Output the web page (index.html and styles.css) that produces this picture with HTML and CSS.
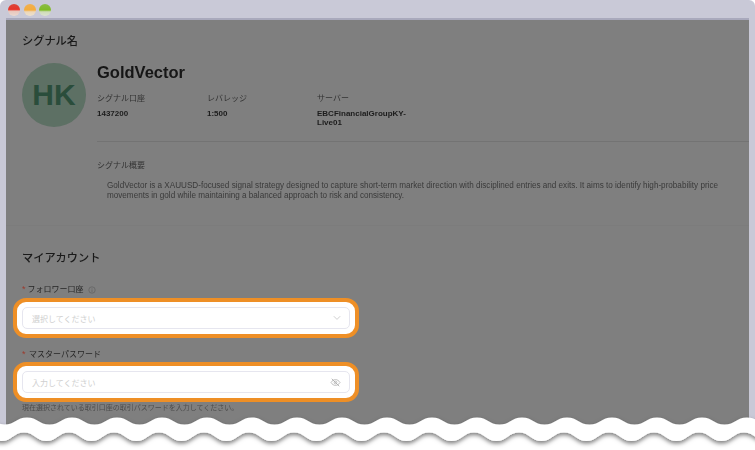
FILE: index.html
```html
<!DOCTYPE html>
<html lang="ja">
<head>
  <meta charset="UTF-8">
  <meta name="viewport" content="width=device-width, initial-scale=1.0">
  <title>シグナル名</title>
  <link rel="stylesheet" href="styles.css">
</head>
<body>
  <div class="window">
    <div class="titlebar">
      <span class="light red"></span>
      <span class="light orange"></span>
      <span class="light green"></span>
    </div>

    <div class="content">
      <section class="card card-signal">
        <h2 class="card-title">シグナル名</h2>
        <div class="profile">
          <div class="avatar">HK</div>
          <div class="info">
            <div class="name">GoldVector</div>
            <div class="stats">
              <div>
                <div class="stat-label">シグナル口座</div>
                <div class="stat-value">1437200</div>
              </div>
              <div>
                <div class="stat-label">レバレッジ</div>
                <div class="stat-value">1:500</div>
              </div>
              <div>
                <div class="stat-label">サーバー</div>
                <div class="stat-value">EBCFinancialGroupKY-Live01</div>
              </div>
            </div>
            <div class="summary">
              <div class="stat-label">シグナル概要</div>
              <p class="summary-text">GoldVector is a XAUUSD-focused signal strategy designed to capture short-term market direction with disciplined entries and exits. It aims to identify high-probability price movements in gold while maintaining a balanced approach to risk and consistency.</p>
            </div>
          </div>
        </div>
      </section>

      <section class="card card-account">
        <h2 class="card-title">マイアカウント</h2>

        <label class="field-label first">
          <span class="star">*</span>フォロワー口座
          <svg class="info-icon" viewBox="0 0 8 8" width="8" height="8">
            <circle cx="4" cy="4" r="3.2" fill="none" stroke="#5c5c5c" stroke-width="0.6"/>
            <path d="M4 3.4V6M4 2.2v.6" stroke="#5c5c5c" stroke-width="0.6" fill="none"/>
          </svg>
        </label>
        <div class="highlight">
          <div class="input">
            <span>選択してください</span>
            <svg viewBox="0 0 8 6" width="8" height="6">
              <path d="M.8 1.2 4 4.4l3.2-3.2" fill="none" stroke="#c4c4c4" stroke-width="0.8"/>
            </svg>
          </div>
        </div>

        <label class="field-label second">
          <span class="star wide">*</span>マスターパスワード
        </label>
        <div class="highlight tight">
          <div class="input">
            <span>入力してください</span>
            <svg viewBox="0 0 12 10" width="11" height="9">
              <path d="M1 5c1.4-2.2 3-3.2 5-3.2S9.600 2.800 11 5C9.600 7.200 8 8.200 6 8.200S2.400 7.200 1 5Z" fill="none" stroke="#a8a8a8" stroke-width="0.8"/>
              <circle cx="6" cy="5" r="1.500" fill="none" stroke="#a8a8a8" stroke-width="0.8"/>
              <path d="M1.800 .8l8.400 8.400" stroke="#a8a8a8" stroke-width="0.9"/>
            </svg>
          </div>
        </div>
        <p class="hint">現在選択されている取引口座の取引パスワードを入力してください。</p>
      </section>
    </div>
  </div>

  <!-- torn edge across the bottom of the screenshot -->
  <svg class="wave" viewBox="0 0 755 40" width="755" height="40">
    <defs>
      <filter id="wave-shadow" x="-2%" y="-40%" width="104%" height="200%">
        <feDropShadow dx="0" dy="2.500" stdDeviation="2" flood-color="#000" flood-opacity="0.5"/>
      </filter>
    </defs>
    <path id="band" fill="#fff" filter="url(#wave-shadow)" d=""/>
  </svg>

  <script>
    // Wavy band: period 45px. Upper crests at x=27, lower ones a little to the left
    const period = 45;
    const half = period / 2;
    const first = 27 - period * 2;
    const last = first + period * 20;
    const bend = 10.5; // control point offset, rounder than a plain sine

    let d = `M${first - half} 14.500`;
    for (let x = first; x <= last; x += period) {
      d += ` C${x - half + bend} 14.500 ${x - bend} 7.500 ${x} 7.500 S${x + half - bend} 14.500 ${x + half} 14.500`;
    }
    d += ` L${last + half} 31`;
    for (let x = last - 3; x >= first - 3; x -= period) {
      d += ` C${x + half - bend} 31 ${x + bend} 22.500 ${x} 22.500 S${x - half + bend} 31 ${x - half} 31`;
    }
    d += ' Z';
    document.getElementById('band').setAttribute('d', d);
  </script>
</body>
</html>
```

FILE: styles.css
```css
body {
  margin: 0;
  background: #fff;
  font-family: "Liberation Sans", "Noto Sans CJK JP", sans-serif;
  color: #1c1c1c;
  overflow: hidden;
}

.window {
  height: 428px;
  overflow: hidden;
  background: #c9c9d7;
  padding: 0 6px;
  border-radius: 6px 6px 0 0;
}

.titlebar {
  display: flex;
  gap: 3.500px;
  align-items: center;
  height: 18px;
  padding: 2px 0 0 2px;
  box-sizing: border-box;
  filter: blur(0.3px);
}

.light {
  width: 12px;
  height: 12px;
  border-radius: 50%;
}

.red { background: linear-gradient(#d9483c 0, #e8352a 45%, #e9c6bc 60%, #e9d8d0 100%); }
.orange { background: linear-gradient(#f0b050 0, #f4ac3c 50%, #edd7b8 65%, #eadfcf 100%); }
.green { background: linear-gradient(#8cbb48 0, #7fbc24 50%, #cfdcb8 65%, #dbe2cf 100%); }

.content {
  height: 410px;
  background: #7f7f7f;
  border-top: 2px solid #a9a9bc;
}

.card {
  padding-left: 16px;
}

.card-signal {
  height: 205px;
  padding-top: 14px;
  box-sizing: border-box;
}

.card-account {
  padding-top: 25px;
  border-top: 1px solid #7c7c7c;
}

.card-title {
  margin: 0;
  font-size: 11.200px;
  line-height: 14px;
  font-weight: 500;
  color: #1a1a1a;
  filter: blur(0.3px);
}

.profile {
  display: flex;
  gap: 11px;
  margin-top: 14px;
}

.avatar {
  flex: none;
  width: 64px;
  height: 64px;
  margin-top: 1px;
  border-radius: 50%;
  background: #5d7064;
  color: #2a4d3b;
  font-size: 30px;
  font-weight: 700;
  line-height: 64px;
  text-align: center;
}

.info {
  flex: 1;
  filter: blur(0.3px);
}

.name {
  font-size: 16.500px;
  font-weight: 700;
  line-height: 20px;
  color: #161616;
}

.stats {
  display: grid;
  grid-template-columns: 100px 100px 100px;
  gap: 10px;
  margin-top: 12px;
  padding-bottom: 14px;
  border-bottom: 1px solid #737373;
}

.stat-label {
  font-size: 8px;
  line-height: 10px;
  color: #333;
}

.stat-value {
  margin-top: 5px;
  font-size: 8px;
  font-weight: 700;
  line-height: 9px;
  color: #1c1c1c;
}

.summary {
  margin-top: 19px;
}

.summary-text {
  margin: 10px 24px 0 10px;
  font-size: 8.150px;
  line-height: 10px;
  color: #3a3a3a;
}

.field-label {
  display: block;
  font-size: 8px;
  line-height: 10px;
  color: #262626;
  filter: blur(0.3px);
}

.field-label.first {
  margin-top: 20px;
}

.field-label.second {
  margin-top: 12px;
}

.star {
  color: #9c3a2c;
  font-size: 9px;
  line-height: 0;
  margin-right: 2px;
}

.star.wide {
  margin-right: 3.500px;
}

.info-icon {
  margin-left: 2px;
  vertical-align: top;
  margin-top: 1px;
}

.highlight {
  width: 328px;
  margin: 3px 0 0 -9px;
  padding: 5px;
  border: 4px solid #ee8f26;
  border-radius: 13px;
  background: #fff;
}

.highlight.tight {
  margin-top: 2px;
}

.input {
  display: flex;
  align-items: center;
  justify-content: space-between;
  height: 22px;
  box-sizing: border-box;
  padding: 0 8px 0 9px;
  border: 1px solid #e6e6ef;
  border-radius: 5px;
  font-size: 8px;
  color: #cfcfcf;
}

.hint {
  margin: 1px 0 0;
  font-size: 7px;
  line-height: 10px;
  color: #4c4c4c;
  filter: blur(0.3px);
}

.wave {
  position: absolute;
  left: 0;
  top: 410px;
  filter: blur(0.4px);
}
```
